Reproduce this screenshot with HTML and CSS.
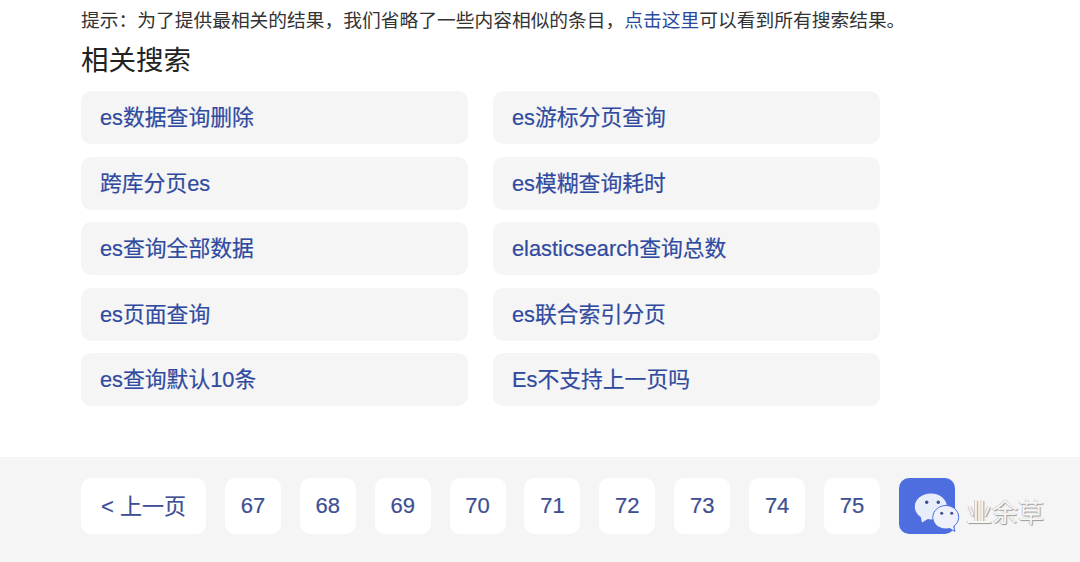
FILE: index.html
```html
<!DOCTYPE html>
<html lang="zh-CN">
<head>
<meta charset="utf-8">
<title>相关搜索</title>
<link rel="stylesheet" href="styles.css">
</head>
<body>
<main class="results">
  <p class="notice">提示：为了提供最相关的结果，我们省略了一些内容相似的条目，<a href="#">点击这里</a>可以看到所有搜索结果。</p>
  <h2 class="title">相关搜索</h2>
  <div class="related">
    <a class="chip" href="#">es数据查询删除</a>
    <a class="chip" href="#">es游标分页查询</a>
    <a class="chip" href="#">跨库分页es</a>
    <a class="chip" href="#">es模糊查询耗时</a>
    <a class="chip" href="#">es查询全部数据</a>
    <a class="chip" href="#">elasticsearch查询总数</a>
    <a class="chip" href="#">es页面查询</a>
    <a class="chip" href="#">es联合索引分页</a>
    <a class="chip" href="#">es查询默认10条</a>
    <a class="chip" href="#">Es不支持上一页吗</a>
  </div>
</main>
<footer class="pager">
  <a class="page prev" href="#">&lt; 上一页</a>
  <a class="page" href="#">67</a>
  <a class="page" href="#">68</a>
  <a class="page" href="#">69</a>
  <a class="page" href="#">70</a>
  <a class="page" href="#">71</a>
  <a class="page" href="#">72</a>
  <a class="page" href="#">73</a>
  <a class="page" href="#">74</a>
  <a class="page" href="#">75</a>
  <a class="page current" href="#">
    <svg class="wechat" viewBox="0 0 62 56" width="62" height="56" aria-hidden="true">
      <path class="bubble-back" d="M32 15.500c-9 0-16.200 5.800-16.200 13.200 0 4.300 2.400 8 6 10.400L23 44.500l5.800-3.400c1 .2 2.100.3 3.200.3 9 0 16-5.800 16-12.700S41 15.500 32 15.500z"/>
      <path class="bubble-front" d="M47 27.500c-7.300 0-13.200 5.300-13.200 12 0 6.400 5.900 11.500 13.200 11.500 1.300 0 2.500-.2 3.700-.5l5.300 3-1.300-5.200c3-2.100 5-5.300 5-8.800 0-6.700-5.500-12-12.700-12z"/>
      <circle class="eye" cx="27.700" cy="24.300" r="1.700"/>
      <circle class="eye" cx="39.300" cy="24.300" r="1.700"/>
      <circle class="eye" cx="42.700" cy="35.300" r="1.500"/>
      <circle class="eye" cx="52.700" cy="35.300" r="1.500"/>
    </svg>
  </a>
  <span class="watermark">业余草</span>
</footer>
</body>
</html>
```
FILE: styles.css
```css
html, body {
  margin: 0;
  padding: 0;
}

body {
  width: 1080px;
  height: 562px;
  overflow: hidden;
  background: #fff;
  font-family: "Liberation Sans", "Noto Sans CJK SC", sans-serif;
  color: #222;
}

a {
  text-decoration: none;
}

.results {
  height: 457px;
  padding-left: 81px;
  box-sizing: border-box;
}

.notice {
  margin: 0;
  padding-top: 9px;
  font-size: 18.74px;
  line-height: 24px;
  color: #333;
}

.notice a {
  color: #2b4a9e;
}

.title {
  margin: 0;
  padding-top: 8px;
  font-size: 27.5px;
  line-height: 40px;
  height: 58px;
  box-sizing: border-box;
  font-weight: 400;
  color: #222;
}

.related {
  display: grid;
  grid-template-columns: 387px 387px;
  grid-auto-rows: 53px;
  column-gap: 25px;
  row-gap: 12.5px;
}

.chip {
  display: flex;
  align-items: center;
  box-sizing: border-box;
  padding: 0 0 4px 19px;
  border-radius: 10px;
  background: #f5f5f6;
  color: #2f4a9f;
  font-size: 21.8px;
  -webkit-text-stroke: 0.2px #2f4a9f;
}

.pager {
  position: relative;
  height: 105px;
  box-sizing: border-box;
  padding: 21px 0 0 81px;
  display: flex;
  align-items: flex-start;
  gap: 18.9px;
  background: #f5f5f6;
}

.page {
  flex: none;
  display: flex;
  align-items: center;
  justify-content: center;
  width: 56px;
  height: 56px;
  border-radius: 10px;
  background: #fff;
  color: #3d4f92;
  font-size: 22px;
  -webkit-text-stroke: 0.2px #3d4f92;
}

.prev {
  width: 125px;
  box-sizing: border-box;
  padding-bottom: 5px;
}

.current {
  justify-content: flex-start;
  background: #4e6ee0;
}

.wechat {
  display: block;
  flex: none;
}

.bubble-back {
  fill: #e8edfb;
}

.bubble-front {
  fill: #eef1fb;
  stroke: #4e6ee0;
  stroke-width: 1;
}

.eye {
  fill: #3f4f88;
}

.watermark {
  position: absolute;
  left: 966px;
  top: 41px;
  font-size: 26px;
  line-height: 30px;
  color: #f6f6f6;
  text-shadow: 1px 1px 1px #999, -0.5px -0.5px 0 #aaa;
}
```
